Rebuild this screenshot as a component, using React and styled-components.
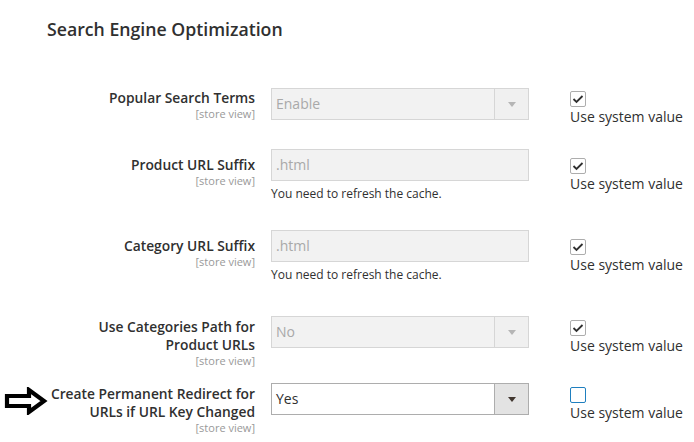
import React from "react";
import styled, { createGlobalStyle } from "styled-components";

const GlobalStyle = createGlobalStyle`
  body {
    margin: 0;
    background: #fff;
    font-family: "Open Sans", "Noto Sans", sans-serif;
    color: #303030;
  }
`;

const Page = styled.div`
  padding: 17px 0 0 0;
  width: 694px;
  height: 442px;
  overflow: hidden;
`;

const Title = styled.h2`
  margin: 0 0 0 47px;
  font-size: 17.7px;
  line-height: 24px;
  font-weight: 600;
  color: #303030;
`;

const Rows = styled.div`
  margin-top: 47px;
`;

const Row = styled.div`
  display: grid;
  grid-template-columns: 255px 258px 1fr;
  column-gap: 16px;
  height: ${(p) => p.$h}px;
`;

const LabelCell = styled.div`
  display: flex;
  justify-content: space-between;
  align-items: flex-start;
  padding-top: ${(p) => p.$top}px;
`;

const LabelText = styled.div`
  margin-left: auto;
  text-align: right;
`;

const Label = styled.div`
  font-size: 13.8px;
  line-height: 18px;
  font-weight: 600;
  color: #303030;
`;

const Scope = styled.div`
  font-size: 11px;
  line-height: 14px;
  color: #999;
`;

const Control = styled.div`
  display: flex;
  flex-direction: column;
`;

const SelectBox = styled.div`
  display: flex;
  height: 32px;
  box-sizing: border-box;
  border: 1px solid ${(p) => (p.$disabled ? "#d6d6d6" : "#adadad")};
  background: ${(p) => (p.$disabled ? "#f2f2f2" : "#fff")};
`;

const Value = styled.div`
  flex: 1;
  padding-left: 4px;
  font-size: 14px;
  line-height: 30px;
  color: ${(p) => (p.$disabled ? "#a9a9a9" : "#303030")};
`;

const Caret = styled.div`
  width: 33px;
  display: flex;
  align-items: center;
  justify-content: center;
  border-left: 1px solid ${(p) => (p.$disabled ? "#d6d6d6" : "#adadad")};
  background: ${(p) => (p.$disabled ? "#f0f0f0" : "#e3e3e3")};
  &::after {
    content: "";
    width: 0;
    height: 0;
    border-left: 4.5px solid transparent;
    border-right: 4.5px solid transparent;
    border-top: 5px solid ${(p) => (p.$disabled ? "#b5b5b5" : "#41362f")};
  }
`;

const Note = styled.div`
  margin-top: 4px;
  font-size: 12px;
  line-height: 18px;
  color: #303030;
`;

const SystemCell = styled.div`
  padding: ${(p) => p.$top}px 0 0 25px;
`;

const Box = styled.div`
  width: 16px;
  height: 16px;
  box-sizing: border-box;
  border: 1px solid ${(p) => (p.$checked ? "#adadad" : "#1f7fbf")};
  border-radius: 2px;
  background: #fff;
  display: flex;
  align-items: center;
  justify-content: center;
`;

const SystemText = styled.div`
  font-size: 14px;
  line-height: 20px;
  color: #303030;
`;

const Arrow = () => (
  <svg width="44" height="28" viewBox="0 0 44 28" style={{ marginLeft: 4, marginTop: 2 }}>
    <path
      d="M3 9 H25 V3 L40 14 L25 25 V19 H3 Z"
      fill="#fff"
      stroke="#000"
      strokeWidth="4.2"
      strokeLinejoin="miter"
    />
  </svg>
);

const Check = () => (
  <svg width="12" height="10" viewBox="0 0 12 10">
    <path d="M1.5 5 L4.5 8 L10.5 2" fill="none" stroke="#303030" strokeWidth="1.8" />
  </svg>
);

const Select = ({ value, disabled }) => (
  <SelectBox $disabled={disabled}>
    <Value $disabled={disabled}>{value}</Value>
    <Caret $disabled={disabled} />
  </SelectBox>
);

const Input = ({ value }) => (
  <SelectBox $disabled>
    <Value $disabled>{value}</Value>
  </SelectBox>
);

const rows = [
  { h: 61, top: 3, ltop: 1, label: ["Popular Search Terms"], kind: "select", value: "Enable", disabled: true, checked: true },
  { h: 81, top: 9, ltop: 7, label: ["Product URL Suffix"], kind: "input", value: ".html", note: true, checked: true },
  { h: 86, top: 9, ltop: 7, label: ["Category URL Suffix"], kind: "input", value: ".html", note: true, checked: true },
  { h: 67, top: 4, ltop: 2, label: ["Use Categories Path for", "Product URLs"], kind: "select", value: "No", disabled: true, checked: true },
  { h: 60, top: 4, ltop: 2, label: ["Create Permanent Redirect for", "URLs if URL Key Changed"], kind: "select", value: "Yes", disabled: false, checked: false, arrow: true },
];

export default function App() {
  return (
    <Page>
      <GlobalStyle />
      <Title>Search Engine Optimization</Title>
      <Rows>
        {rows.map((r, i) => (
          <Row key={i} $h={r.h}>
            <LabelCell $top={r.ltop}>
              {r.arrow && <Arrow />}
              <LabelText>
                {r.label.map((l) => (
                  <Label key={l}>{l}</Label>
                ))}
                <Scope>[store view]</Scope>
              </LabelText>
            </LabelCell>
            <Control>
              {r.kind === "select" ? (
                <Select value={r.value} disabled={r.disabled} />
              ) : (
                <Input value={r.value} />
              )}
              {r.note && <Note>You need to refresh the cache.</Note>}
            </Control>
            <SystemCell $top={r.top}>
              <Box $checked={r.checked}>{r.checked && <Check />}</Box>
              <SystemText>Use system value</SystemText>
            </SystemCell>
          </Row>
        ))}
      </Rows>
    </Page>
  );
}
